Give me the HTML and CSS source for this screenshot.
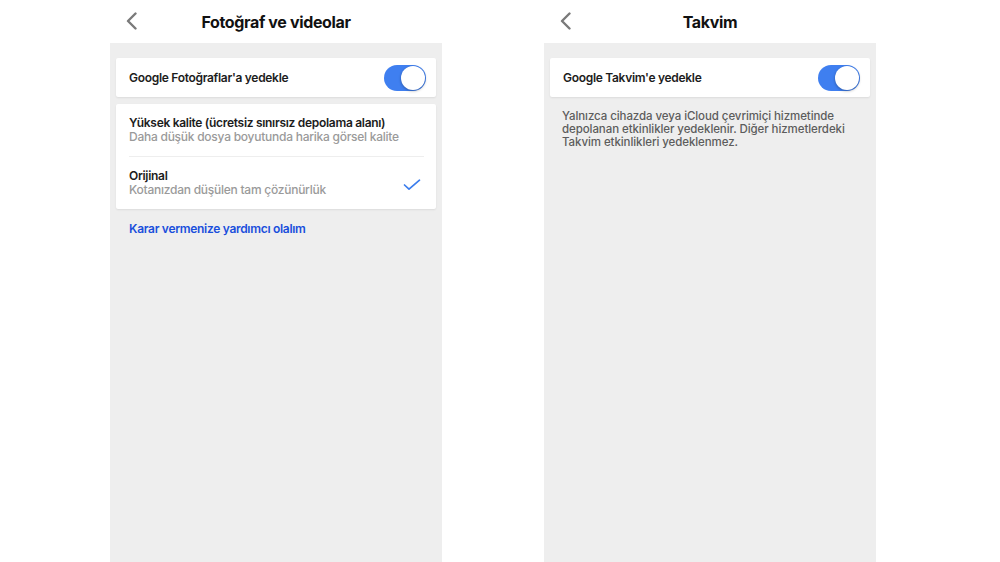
FILE: index.html
```html
<!DOCTYPE html>
<html lang="tr">
<head>
<meta charset="utf-8">
<link rel="stylesheet" href="styles.css">
</head>
<body>
<div class="screens">
  <section class="screen">
    <header class="topbar">
      <svg class="back" width="12" height="18" viewBox="0 0 12 18"><polyline points="9.5,1.5 2,9 9.5,16.5" fill="none" stroke="#7a7a7a" stroke-width="2.4" stroke-linecap="round" stroke-linejoin="round"/></svg>
      <h1 class="title">Fotoğraf ve videolar</h1>
    </header>
    <div class="panel">
      <div class="card toggle-row">
        <span class="label">Google Fotoğraflar'a yedekle</span>
        <span class="switch"><span class="knob"></span></span>
      </div>
      <div class="card options">
        <div class="option">
          <div class="texts">
            <div class="opt-title">Yüksek kalite (ücretsiz sınırsız depolama alanı)</div>
            <div class="opt-sub">Daha düşük dosya boyutunda harika görsel kalite</div>
          </div>
        </div>
        <div class="option">
          <div class="texts">
            <div class="opt-title">Orijinal</div>
            <div class="opt-sub">Kotanızdan düşülen tam çözünürlük</div>
          </div>
          <svg class="check" width="18" height="12" viewBox="0 0 18 12"><polyline points="1.5,6 6,10.2 16.5,1.2" fill="none" stroke="#3b7ded" stroke-width="1.7" stroke-linecap="round" stroke-linejoin="round"/></svg>
        </div>
      </div>
      <a class="help-link">Karar vermenize yardımcı olalım</a>
    </div>
  </section>

  <section class="screen">
    <header class="topbar">
      <svg class="back" width="12" height="18" viewBox="0 0 12 18"><polyline points="9.5,1.5 2,9 9.5,16.5" fill="none" stroke="#7a7a7a" stroke-width="2.4" stroke-linecap="round" stroke-linejoin="round"/></svg>
      <h1 class="title">Takvim</h1>
    </header>
    <div class="panel">
      <div class="card toggle-row">
        <span class="label">Google Takvim'e yedekle</span>
        <span class="switch"><span class="knob"></span></span>
      </div>
      <p class="info">Yalnızca cihazda veya iCloud çevrimiçi hizmetinde depolanan etkinlikler yedeklenir. Diğer hizmetlerdeki Takvim etkinlikleri yedeklenmez.</p>
    </div>
  </section>
</div>
</body>
</html>
```

FILE: styles.css
```css
* { box-sizing: border-box; }
html, body {
  margin: 0;
  height: 100%;
  background: #ffffff;
  font-family: Inter, "Noto Sans", "Liberation Sans", sans-serif;
  color: #1c1c1c;
  overflow: hidden;
}
.screens {
  display: flex;
  gap: 102px;
  padding-left: 110px;
  height: 562px;
}
.screen {
  width: 332px;
  display: flex;
  flex-direction: column;
}
.topbar {
  position: relative;
  height: 43px;
  display: flex;
  align-items: center;
  justify-content: center;
}
.back {
  position: absolute;
  left: 16px;
  top: 12px;
}
.title {
  margin: 0;
  font-size: 16px;
  font-weight: 700;
  letter-spacing: -0.35px;
  color: #111;
}
.panel {
  flex: 1;
  background: #eeeeee;
  padding: 15px 6px 0;
}
.card {
  background: #ffffff;
  border-radius: 2px;
  box-shadow: 0 1px 2px rgba(0,0,0,0.08);
}
.toggle-row {
  height: 39px;
  display: flex;
  align-items: center;
  justify-content: space-between;
  padding: 0 10px 0 13px;
}
.label {
  font-size: 12px;
  font-weight: 600;
  letter-spacing: -0.3px;
  color: #1c1c1c;
}
.switch {
  width: 42px;
  height: 26px;
  border-radius: 13px;
  background: #3f7ff0;
  display: flex;
  align-items: center;
  justify-content: flex-end;
  padding: 1px;
}
.knob {
  width: 24px;
  height: 24px;
  border-radius: 50%;
  background: #ffffff;
  box-shadow: 0 1px 3px rgba(0,0,0,0.3);
}
.options {
  margin-top: 7px;
  padding: 0 12px 0 13px;
}
.option {
  display: flex;
  align-items: center;
  justify-content: space-between;
  height: 52px;
}
.option + .option {
  border-top: 1px solid #eeeeee;
  height: 53px;
}
.opt-title {
  font-size: 12px;
  font-weight: 600;
  letter-spacing: -0.3px;
  line-height: 14px;
  color: #1c1c1c;
}
.opt-sub {
  font-size: 12px;
  font-weight: 500;
  letter-spacing: -0.25px;
  line-height: 14px;
  color: #9a9a9a;
}
.check { margin-right: 3px; margin-top: 4px; }
.help-link {
  display: block;
  margin-top: 13px;
  padding-left: 13px;
  font-size: 12px;
  font-weight: 600;
  letter-spacing: -0.3px;
  color: #1a4fdc;
  line-height: 14px;
}
.info {
  margin: 13px 0 0;
  padding: 0 12px 0 12px;
  font-size: 11.5px;
  font-weight: 500;
  letter-spacing: -0.08px;
  line-height: 13px;
  color: #5c5c5c;
}
```
